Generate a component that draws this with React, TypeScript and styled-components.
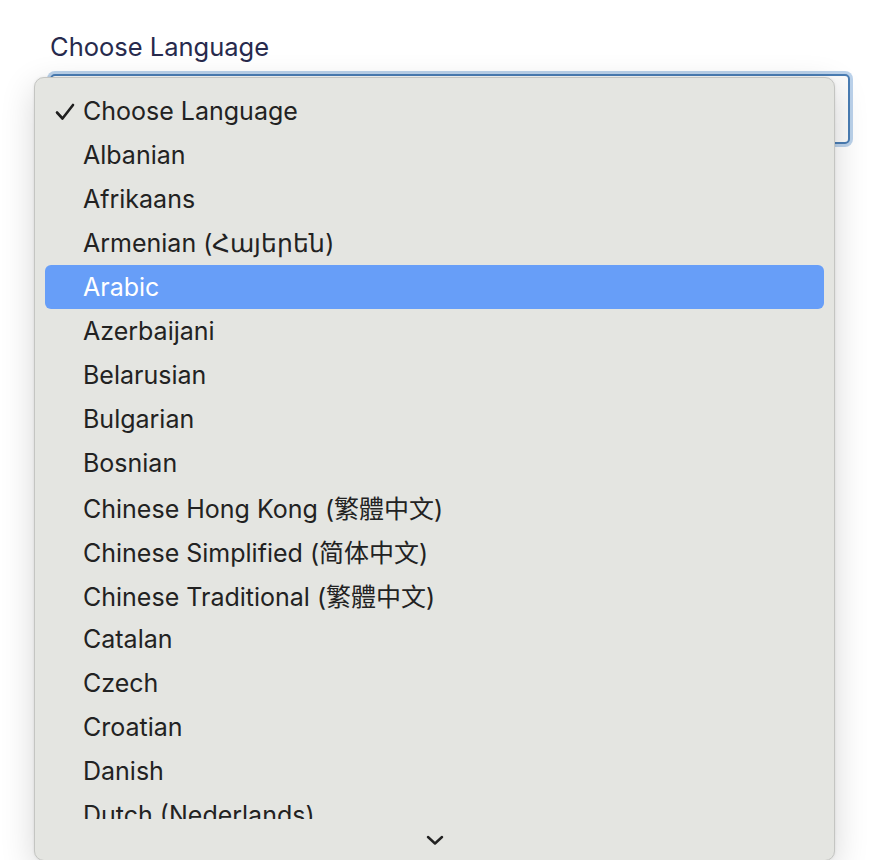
import React from "react";
import styled, { createGlobalStyle } from "styled-components";

const languages = [
  "Choose Language",
  "Albanian",
  "Afrikaans",
  "Armenian (Հայերեն)",
  "Arabic",
  "Azerbaijani",
  "Belarusian",
  "Bulgarian",
  "Bosnian",
  "Chinese Hong Kong (繁體中文)",
  "Chinese Simplified (简体中文)",
  "Chinese Traditional (繁體中文)",
  "Catalan",
  "Czech",
  "Croatian",
  "Danish",
  "Dutch (Nederlands)",
];

const GlobalStyle = createGlobalStyle`
  html, body {
    margin: 0;
    padding: 0;
    background: #ffffff;
    overflow: hidden;
  }
  body {
    font-family: Inter, "Noto Sans", sans-serif;
  }
`;

function App() {
  const selected = 0;
  const hovered = 4;

  return (
    <>
      <GlobalStyle />
      <Page>
        <Field>
          <Label>Choose Language</Label>
          <SelectBox />
          <Menu>
            <OptionList>
              {languages.map((lang, idx) => (
                <Option key={lang} active={idx === hovered}>
                  <CheckSlot>
                    {idx === selected && (
                      <svg width="20" height="18" viewBox="0 0 20 18">
                        <polyline
                          points="2,9.5 7.5,15.5 18,2"
                          fill="none"
                          stroke="#1f1f1f"
                          strokeWidth="2.6"
                          strokeLinecap="round"
                          strokeLinejoin="round"
                        />
                      </svg>
                    )}
                  </CheckSlot>
                  <OptionText>{lang}</OptionText>
                </Option>
              ))}
            </OptionList>
            <ScrollArrow>
              <svg width="18" height="10" viewBox="0 0 18 10">
                <polyline
                  points="2,2 9,8.5 16,2"
                  fill="none"
                  stroke="#222"
                  strokeWidth="2.4"
                  strokeLinecap="round"
                  strokeLinejoin="round"
                />
              </svg>
            </ScrollArrow>
          </Menu>
        </Field>
      </Page>
    </>
  );
}

const Page = styled.div`
  width: 876px;
  height: 860px;
  padding: 30px 0 0 50px;
  box-sizing: border-box;
`;

const Field = styled.div`
  position: relative;
  width: 800px;
`;

const Label = styled.div`
  font-family: Inter, "Noto Sans", sans-serif;
  font-size: 25.5px;
  line-height: 34px;
  color: #272a4d;
  margin-bottom: 10px;
`;

const SelectBox = styled.div`
  height: 66px;
  border: 2px solid #4a7db4;
  border-radius: 5px;
  background: #fbfbfb;
  box-shadow: 0 0 0 3px rgba(120, 165, 215, 0.5);
`;

const Menu = styled.div`
  position: absolute;
  left: -16px;
  top: 47px;
  width: 799px;
  height: 782px;
  background: #e4e5e1;
  border: 1px solid #c4c5c2;
  border-radius: 10px;
  box-shadow: 0 10px 34px rgba(0, 0, 0, 0.16), 0 0 3px rgba(0, 0, 0, 0.08);
  display: flex;
  flex-direction: column;
  overflow: hidden;
`;

const OptionList = styled.div`
  height: 741px;
  flex-shrink: 0;
  padding-top: 11px;
  box-sizing: border-box;
  overflow: hidden;
`;

const Option = styled.div<{ active: boolean }>`
  height: 44px;
  margin: 0 10px;
  padding-left: 10px;
  display: flex;
  align-items: center;
  border-radius: 6px;
  background: ${(props) => (props.active ? "#679ef8" : "transparent")};
  color: ${(props) => (props.active ? "#ffffff" : "#222222")};
`;

const CheckSlot = styled.span`
  width: 28px;
  display: flex;
  align-items: center;
  padding-top: 2px;
`;

const OptionText = styled.span`
  font-family: Inter, "Noto Sans", "Noto Sans CJK TC", sans-serif;
  font-size: 25px;
  white-space: nowrap;
`;

const ScrollArrow = styled.div`
  flex: 1;
  display: flex;
  align-items: center;
  justify-content: center;
`;

export default App;
